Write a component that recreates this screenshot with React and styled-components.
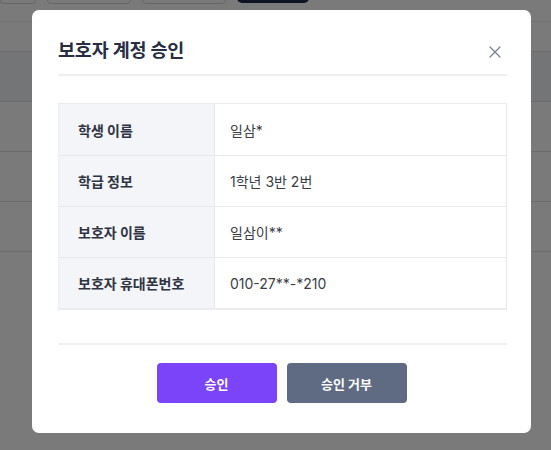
import React from "react";
import styled, { createGlobalStyle } from "styled-components";

const rows = [
  { label: "학생 이름", value: "일삼*" },
  { label: "학급 정보", value: "1학년 3반 2번" },
  { label: "보호자 이름", value: "일삼이**" },
  { label: "보호자 휴대폰번호", value: "010-27**-*210" },
];

function CloseIcon() {
  return (
    <svg width="12" height="12" viewBox="0 0 12 12" fill="none">
      <path d="M1 1L11 11M11 1L1 11" stroke="#7d8597" strokeWidth="1.4" strokeLinecap="round" />
    </svg>
  );
}

function App() {
  return (
    <>
      <GlobalStyle />
      <Page>
        <Toolbar>
          <GhostButton $w={36} $first />
          <GhostButton $w={84} />
          <GhostButton $w={84} />
          <DarkButton />
        </Toolbar>
        <BgRow $h={30} />
        <BgRow $h={50} $head />
        <BgRow $h={50} />
        <BgRow $h={50} />
        <BgRow $h={50} />
      </Page>
      <Overlay>
        <Modal>
          <Header>
            <Title>보호자 계정 승인</Title>
            <CloseButton>
              <CloseIcon />
            </CloseButton>
          </Header>
          <InfoTable>
            {rows.map((row) => (
              <InfoRow key={row.label}>
                <Label>{row.label}</Label>
                <Value>{row.value}</Value>
              </InfoRow>
            ))}
          </InfoTable>
          <Footer>
            <ActionButton $variant="primary">승인</ActionButton>
            <ActionButton>승인 거부</ActionButton>
          </Footer>
        </Modal>
      </Overlay>
    </>
  );
}

export default App;

const GlobalStyle = createGlobalStyle`
  html, body {
    margin: 0;
    padding: 0;
    background: #fff;
    font-family: Inter, "Noto Sans CJK KR", sans-serif;
  }
  * { box-sizing: border-box; }
`;

const Page = styled.div`
  width: 551px;
  height: 450px;
  overflow: hidden;
  background: #fff;
`;

const Toolbar = styled.div`
  display: flex;
  gap: 10px;
  height: 22px;
  border-bottom: 1px solid #f0f0f0;
`;

const GhostButton = styled.div`
  width: ${(p) => p.$w}px;
  height: 34px;
  margin-top: -30px;
  margin-left: ${(p) => (p.$first ? "0" : "1px")};
  border: 1px solid #d6d6d6;
  border-radius: 4px;
  background: #fff;
`;

const DarkButton = styled.div`
  width: 72px;
  height: 34px;
  margin-top: -31px;
  margin-left: 1px;
  border-radius: 5px;
  background: #1e2a4a;
`;

const BgRow = styled.div`
  height: ${(p) => p.$h}px;
  background: ${(p) => (p.$head ? "#f3f4f7" : "#fff")};
  border-bottom: 1px solid #e2e2e2;
`;

const Overlay = styled.div`
  position: fixed;
  inset: 0;
  background: rgba(0, 0, 0, 0.52);
  display: flex;
  align-items: flex-start;
  padding: 10px 0 0 32px;
`;

const Modal = styled.div`
  width: 499px;
  height: 423px;
  background: #fff;
  border-radius: 7px;
  padding: 0 24px 30px 26px;
  display: flex;
  flex-direction: column;
`;

const Header = styled.div`
  display: flex;
  align-items: center;
  justify-content: space-between;
  padding: 26px 0 10px;
  border-bottom: 2px solid #efefef;
`;

const Title = styled.h2`
  margin: 0;
  font-size: 18.5px;
  line-height: 28px;
  font-weight: 700;
  color: #272d42;
  letter-spacing: -0.2px;
`;

const CloseButton = styled.button`
  display: flex;
  align-items: center;
  justify-content: center;
  width: 20px;
  height: 20px;
  margin: 4px 2px 0 0;
  padding: 0;
  border: none;
  background: none;
  cursor: pointer;
`;

const InfoTable = styled.div`
  margin-top: 27px;
  display: flex;
  flex-direction: column;
  border-top: 1px solid #eaebef;
  border-right: 1px solid #e6e7eb;
  border-bottom: 2px solid #ebecef;
  border-left: 1px solid #eff0f4;
`;

const InfoRow = styled.div`
  display: grid;
  grid-template-columns: 156px 1fr;
  height: 51px;
  & + & {
    border-top: 1px solid #e8e9ed;
  }
`;

const Label = styled.div`
  display: flex;
  align-items: center;
  padding-left: 19px;
  background: #f4f5f9;
  border-right: 1px solid #e6e7eb;
  font-size: 14px;
  font-weight: 700;
  color: #2f3443;
`;

const Value = styled.div`
  display: flex;
  align-items: center;
  padding-left: 15px;
  font-size: 14px;
  color: #3a3d45;
`;

const Footer = styled.div`
  margin-top: 33px;
  padding: 18px 2px 0 0;
  border-top: 2px solid #f0f0f0;
  display: flex;
  justify-content: center;
  gap: 10px;
`;

const ActionButton = styled.button`
  width: 120px;
  height: 40px;
  border: none;
  border-radius: 4px;
  background: ${(p) => (p.$variant === "primary" ? "#7c44f8" : "#5f6a83")};
  color: #fff;
  font-family: inherit;
  font-size: 13px;
  font-weight: 700;
  cursor: pointer;
`;
